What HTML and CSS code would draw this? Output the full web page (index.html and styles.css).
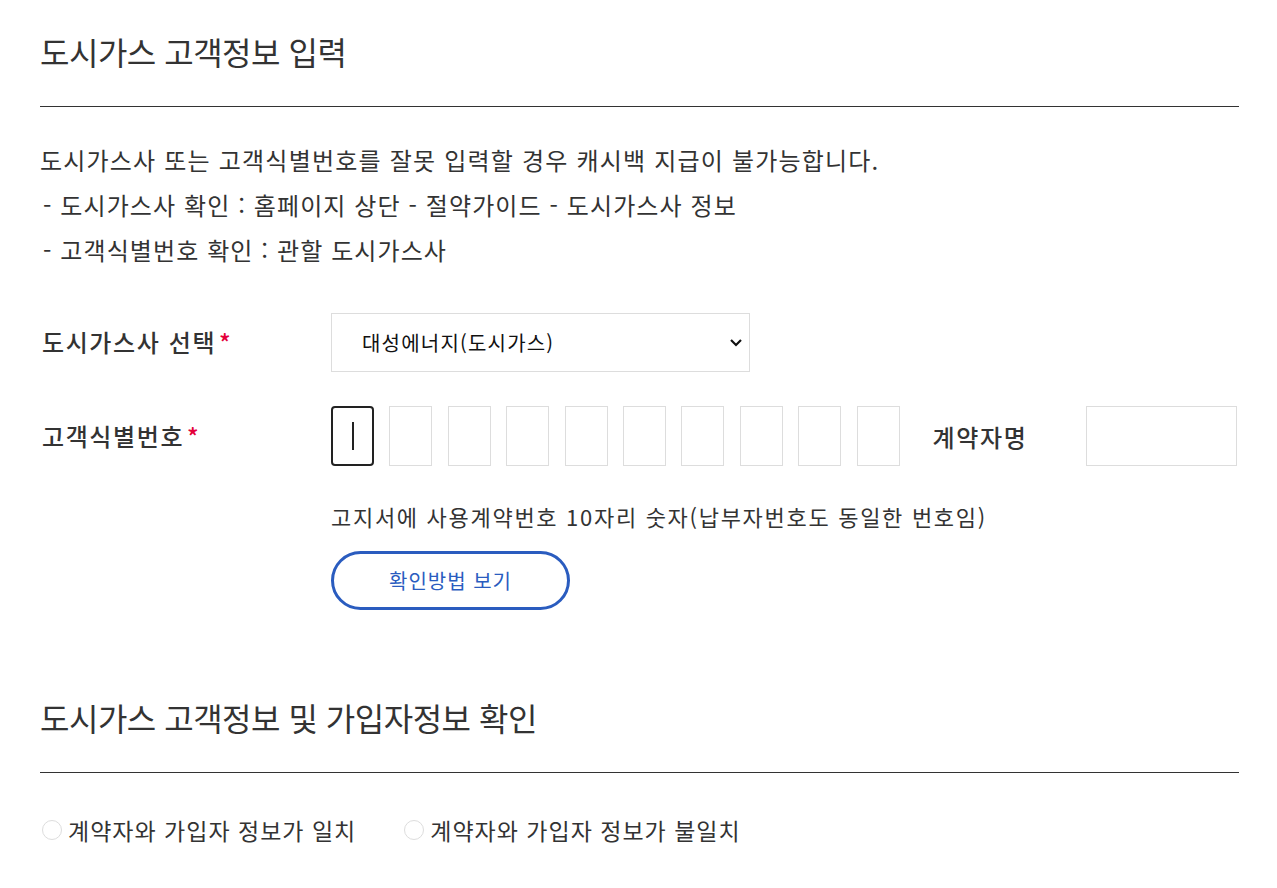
FILE: index.html
```html
<!DOCTYPE html>
<html lang="ko">
<head>
    <meta charset="UTF-8">
    <meta name="viewport" content="width=device-width, initial-scale=1.0">
    <title>도시가스 고객정보 입력</title>
    <link rel="stylesheet" href="styles.css">
</head>
<body>
    <div class="container">
        <h2 class="section-title">도시가스 고객정보 입력</h2>

        <div class="notice">
            <p>도시가스사 또는 고객식별번호를 잘못 입력할 경우 캐시백 지급이 불가능합니다.</p>
            <p class="sub">- 도시가스사 확인 : 홈페이지 상단 - 절약가이드 - 도시가스사 정보</p>
            <p class="sub">- 고객식별번호 확인 : 관할 도시가스사</p>
        </div>

        <div class="form-row">
            <div class="label">도시가스사 선택<span class="req">*</span></div>
            <div class="field">
                <div class="select-box">
                    <span>대성에너지(도시가스)</span>
                    <svg class="arrow" width="14" height="9" viewBox="0 0 14 9"><path d="M2 2 L7 7 L12 2" fill="none" stroke="#111" stroke-width="2.2"/></svg>
                </div>
            </div>
        </div>

        <div class="form-row">
            <div class="label label-tall">고객식별번호<span class="req">*</span></div>
            <div class="field">
                <div class="number-line">
                    <div class="digits">
                        <div class="digit active"><span class="caret"></span></div>
                        <div class="digit"></div>
                        <div class="digit"></div>
                        <div class="digit"></div>
                        <div class="digit"></div>
                        <div class="digit"></div>
                        <div class="digit"></div>
                        <div class="digit"></div>
                        <div class="digit"></div>
                        <div class="digit"></div>
                    </div>
                    <div class="name-label">계약자명</div>
                    <div class="name-input"></div>
                </div>
                <p class="hint">고지서에 사용계약번호 10자리 숫자(납부자번호도 동일한 번호임)</p>
                <button class="btn-guide">확인방법 보기</button>
            </div>
        </div>

        <h2 class="section-title second">도시가스 고객정보 및 가입자정보 확인</h2>

        <div class="radios">
            <label class="radio"><span class="circle"></span>계약자와 가입자 정보가 일치</label>
            <label class="radio"><span class="circle"></span>계약자와 가입자 정보가 불일치</label>
        </div>
    </div>
</body>
</html>
```

FILE: styles.css
```css
body {
    margin: 0;
    padding: 0;
    background: #fff;
    color: #333;
    font-family: "Noto Sans CJK KR", "Noto Sans", sans-serif;
}
.container {
    width: 1199px;
    margin-left: 40px;
    padding-top: 26px;
}
.section-title {
    margin: 0;
    font-size: 32px;
    font-weight: 400;
    line-height: 50px;
    letter-spacing: -0.5px;
    color: #333;
    padding-bottom: 30px;
    border-bottom: 1px solid #333;
}
.section-title.second {
    margin-top: 82px;
}
.notice {
    padding-top: 30px;
    padding-bottom: 34px;
}
.notice p {
    margin: 0;
    font-size: 24px;
    line-height: 45px;
    letter-spacing: 1.2px;
    color: #333;
}
.notice .sub {
    padding-left: 3px;
    letter-spacing: 1.1px;
}
.form-row {
    display: flex;
    margin-top: 7px;
}
.form-row + .form-row {
    margin-top: 34px;
}
.label {
    width: 291px;
    flex: none;
    font-size: 24px;
    font-weight: 500;
    line-height: 58px;
    letter-spacing: 1.6px;
    color: #333;
    padding-left: 2px;
    box-sizing: border-box;
}
.label-tall {
    line-height: 60px;
}
.req {
    color: #e4003a;
    margin-left: 3px;
}
.field {
    flex: 1;
}
.select-box {
    width: 419px;
    height: 59px;
    border: 1px solid #ddd;
    box-sizing: border-box;
    display: flex;
    align-items: center;
    justify-content: space-between;
    padding: 0 6px 0 30px;
    font-size: 20px;
    letter-spacing: 1.2px;
    color: #111;
}
.number-line {
    display: flex;
    align-items: center;
}
.digits {
    display: flex;
    gap: 15.4px;
}
.digit {
    width: 43px;
    height: 60px;
    border: 1px solid #ddd;
    box-sizing: border-box;
    display: flex;
    align-items: center;
    justify-content: center;
}
.digit.active {
    border: 2px solid #222;
    border-radius: 4px;
}
.caret {
    width: 2px;
    height: 28px;
    background: #222;
}
.name-label {
    margin-left: 33px;
    width: 153px;
    font-size: 24px;
    font-weight: 500;
    letter-spacing: 1.7px;
    color: #333;
}
.name-input {
    width: 151px;
    height: 60px;
    border: 1px solid #ddd;
    box-sizing: border-box;
}
.hint {
    margin: 30px 0 0;
    font-size: 22px;
    line-height: 40px;
    letter-spacing: 1.7px;
    color: #333;
}
.btn-guide {
    margin-top: 15px;
    width: 239px;
    height: 59px;
    border: 3px solid #2a5cbf;
    border-radius: 30px;
    background: #fff;
    color: #2a5cbf;
    font-family: "Noto Sans CJK KR", sans-serif;
    font-size: 20px;
    letter-spacing: 1px;
    cursor: pointer;
}
.radios {
    display: flex;
    gap: 46px;
    padding-top: 40px;
}
.radio {
    display: flex;
    align-items: center;
    font-size: 23px;
    letter-spacing: 1px;
    color: #333;
}
.circle {
    width: 20px;
    height: 20px;
    border: 1px solid #ddd;
    border-radius: 50%;
    box-sizing: border-box;
    margin: 0 6px 0 2px;
}
```
